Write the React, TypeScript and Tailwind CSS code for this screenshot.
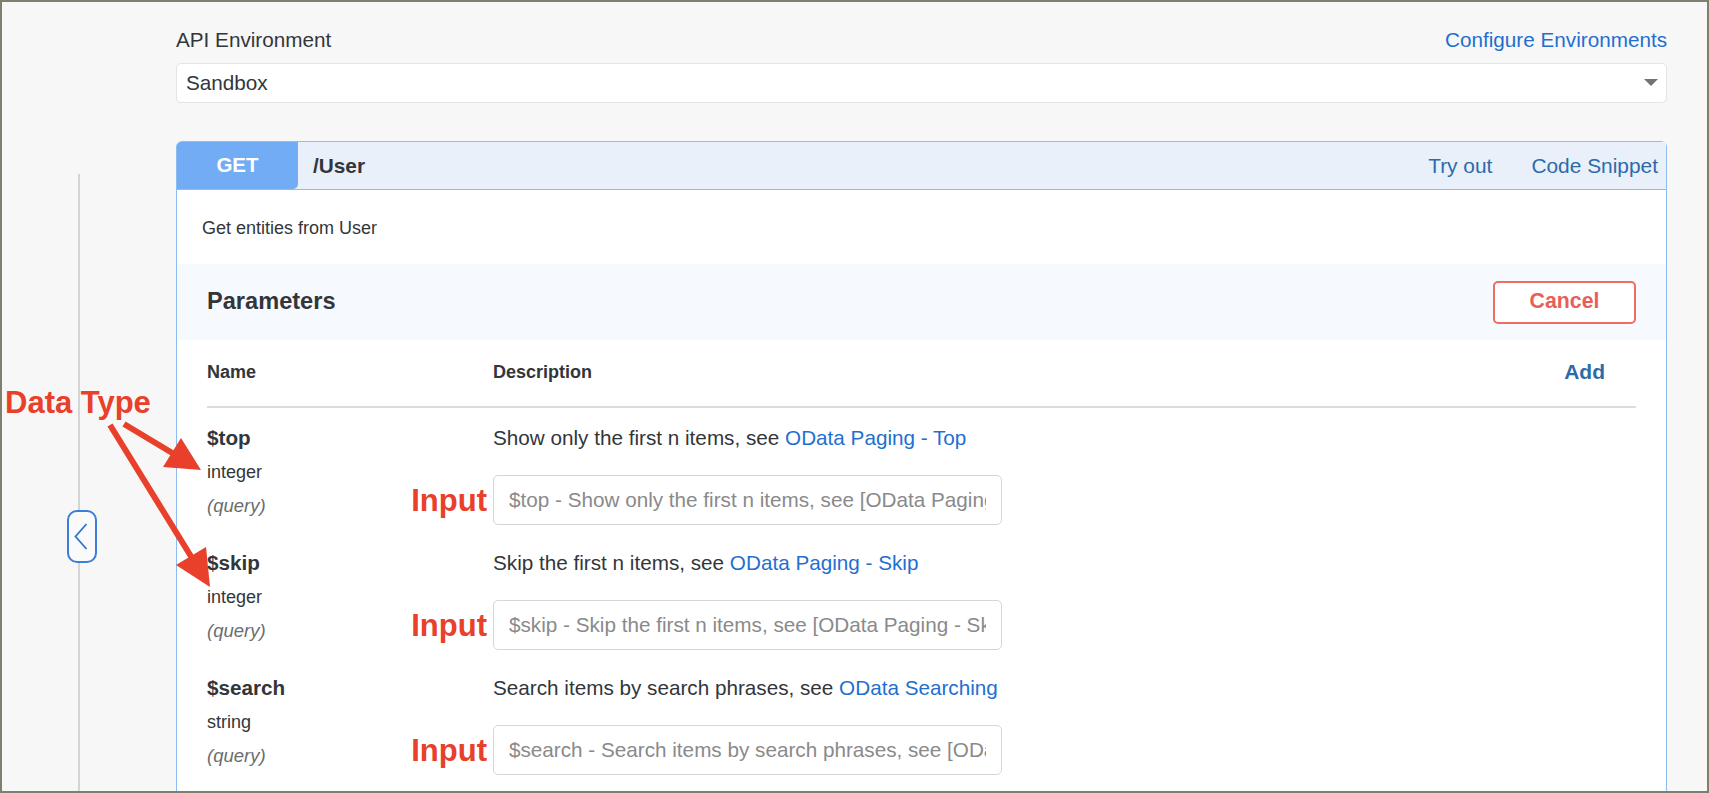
import React from "react";

const PARAMS = [
  {
    name: "$top",
    type: "integer",
    desc: "Show only the first n items, see ",
    link: "OData Paging - Top",
    placeholder:
      "$top - Show only the first n items, see [OData Paging - Top](http://docs.oasis-open.org/odata/odata/v4.01/odata-v4.01-part1-protocol.html#sec_SystemQueryOptiontop)",
  },
  {
    name: "$skip",
    type: "integer",
    desc: "Skip the first n items, see ",
    link: "OData Paging - Skip",
    placeholder:
      "$skip - Skip the first n items, see [OData Paging - Skip](http://docs.oasis-open.org/odata/odata/v4.01/odata-v4.01-part1-protocol.html#sec_SystemQueryOptionskip)",
  },
  {
    name: "$search",
    type: "string",
    desc: "Search items by search phrases, see ",
    link: "OData Searching",
    placeholder:
      "$search - Search items by search phrases, see [OData Searching](http://docs.oasis-open.org/odata/odata/v4.01/odata-v4.01-part1-protocol.html#sec_SystemQueryOptionsearch)",
  },
];

function ParamRow({ p }: { p: (typeof PARAMS)[number] }) {
  return (
    <div className="grid grid-cols-[286px_1fr]">
      <div className="leading-[34px]">
        <div className="text-[20.7px] font-bold">{p.name}</div>
        <div className="text-[18px]">{p.type}</div>
        <div className="text-[18.5px] italic text-[#6a6d70]">(query)</div>
      </div>
      <div>
        <div className="text-[20.7px] leading-[34px]">
          {p.desc}
          <a className="text-[#1f6fd0]">{p.link}</a>
        </div>
        <div className="relative mt-[20px] w-[509px]">
          <span className="absolute right-full top-1/2 mr-[6px] -translate-y-1/2 text-[31px] font-bold leading-[31px] text-[#e8402a]">
            Input
          </span>
          <input
            readOnly
            placeholder={p.placeholder}
            className="h-[50px] w-[509px] rounded-[5px] border border-[#d6d6d6] bg-white px-[15px] text-[20.7px] outline-none placeholder:text-[#8a8a8a]"
          />
        </div>
      </div>
    </div>
  );
}

export default function App() {
  return (
    <div className="relative h-[793px] overflow-hidden border-2 border-[#7f7f6e] bg-[#f7f7f7] font-['Liberation_Sans',Arial,sans-serif] text-[#32363a]">
      <div className="flex h-full">
        <aside className="relative w-[174px] shrink-0 pt-[172px]">
          <div className="ml-[76px] h-full border-l-2 border-[#d5d5d5]" />
          <button className="absolute left-[65px] top-[508px] flex h-[53px] w-[30px] items-center justify-center rounded-[10px] border-2 border-[#3b7dd8] bg-[#fafafa]">
            <svg width="30" height="53" viewBox="0 0 30 53" className="absolute left-[-2px] top-[-2px]">
              <polyline points="19.5,14 8.5,26.5 19.5,39" fill="none" stroke="#2f74d0" strokeWidth="1.8" />
            </svg>
          </button>
        </aside>

        <main className="flex-1 pr-[40px] pt-[24px]">
          <div className="flex h-[28px] items-center justify-between text-[20.7px]">
            <span>API Environment</span>
            <a className="text-[#1f6fd0]">Configure Environments</a>
          </div>
          <div className="mt-[9px] flex h-[40px] items-center justify-between rounded-[5px] border border-[#e4e4e4] bg-white pl-[9px] pr-[8px] text-[20.7px]">
            <span>Sandbox</span>
            <svg width="14" height="8" viewBox="0 0 14 8">
              <polygon points="0,0 14,0 7,7" fill="#737373" />
            </svg>
          </div>

          <section className="mt-[38px] rounded-t-[6px] border-[1.5px] border-b-0 border-[#8cbcf0] bg-white pb-[400px]">
            <div className="flex h-[48px] items-center border-b-[1.5px] border-[#8cbcf0] bg-[#e9f0f9]">
              <div className="flex h-full w-[121px] items-center justify-center rounded-tl-[4px] rounded-br-[5px] bg-[#72acf5] text-[20.5px] font-bold text-white">
                GET
              </div>
              <div className="ml-[15px] text-[20.8px] font-bold">/User</div>
              <div className="ml-auto flex gap-[39px] pr-[8px] text-[20.9px] text-[#2d6aa9]">
                <a>Try out</a>
                <a>Code Snippet</a>
              </div>
            </div>

            <div className="pl-[25px] pt-[25px] text-[18px] leading-[26px]">Get entities from User</div>

            <div className="mt-[23px] flex h-[76px] items-center justify-between bg-[#f6f9fd] px-[30px]">
              <h2 className="text-[23.6px] font-bold">Parameters</h2>
              <button className="h-[43px] w-[143px] rounded-[5px] border-2 border-[#ee6b66] bg-white text-[21.3px] font-bold text-[#e85f59]">
                Cancel
              </button>
            </div>

            <div className="mx-[30px]">
              <div className="grid grid-cols-[286px_1fr_auto] items-center border-b-2 border-[#dcdcdc] pb-[22px] pt-[20px] leading-[24px]">
                <span className="text-[18px] font-bold">Name</span>
                <span className="text-[18px] font-bold">Description</span>
                <a className="pr-[31px] text-[21px] font-bold text-[#2d6aa9]">Add</a>
              </div>
              <div className="flex flex-col gap-[21px] pt-[13px]">
                {PARAMS.map((p) => (
                  <ParamRow key={p.name} p={p} />
                ))}
              </div>
            </div>
          </section>
        </main>
      </div>

      {/* annotation overlay */}
      <div className="absolute left-[3px] top-[385px] text-[31px] font-bold leading-[31px] text-[#e8402a]">Data Type</div>
      <svg width="1709" height="793" viewBox="0 0 1709 793" className="pointer-events-none absolute left-[-2px] top-[-2px]">
        <line x1="124" y1="424" x2="174" y2="454" stroke="#e8402a" strokeWidth="6" />
        <polygon points="201,470 163,467 181,438" fill="#e8402a" />
        <line x1="110" y1="425" x2="192" y2="558" stroke="#e8402a" strokeWidth="6" />
        <polygon points="210,587 176,565 206,547" fill="#e8402a" />
      </svg>
    </div>
  );
}
